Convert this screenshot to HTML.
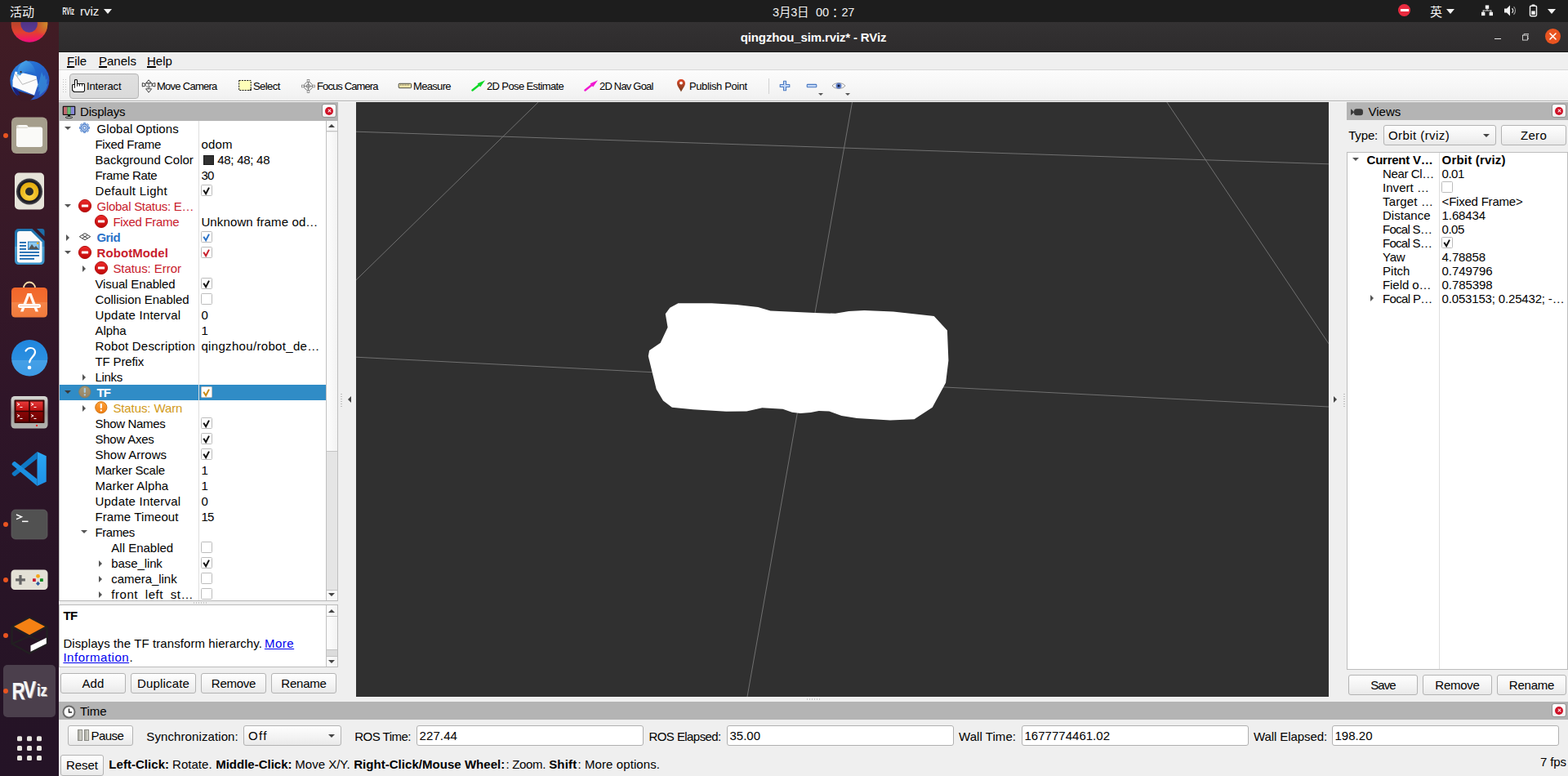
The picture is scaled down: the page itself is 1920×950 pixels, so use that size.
<!DOCTYPE html>
<html lang="zh-CN">
<head>
<meta charset="utf-8">
<title>qingzhou_sim.rviz* - RViz</title>
<style>
*{box-sizing:border-box;margin:0;padding:0}
html,body{width:1920px;height:950px;overflow:hidden;background:#efefef}
body{position:relative;font-family:"Liberation Sans","Noto Sans CJK SC",sans-serif;font-size:15px;color:#000;line-height:19px}
.abs{position:absolute}
.t{position:absolute;white-space:nowrap}
b,.b{font-weight:bold}
#topbar{position:absolute;left:0;top:0;width:1920px;height:27px;background:#1d1d1d;color:#f2f2f2}
#dock{position:absolute;left:0;top:27px;width:72px;height:923px;background:linear-gradient(180deg,#411c24 0%,#3a1a27 20%,#2f1528 50%,#281426 75%,#241326 100%);overflow:hidden}
#titlebar{position:absolute;left:72px;top:27px;width:1848px;height:37px;background:linear-gradient(180deg,#343233 0%,#312f30 40%,#2e2c2d 100%);border-bottom:1px solid #161616;color:#fff}
#menubar{position:absolute;left:72px;top:64px;width:1848px;height:22px;background:#efefef;border-bottom:1px solid #d8d8d8}
#toolbar{position:absolute;left:72px;top:86px;width:1848px;height:38px;background:linear-gradient(180deg,#fcfcfc 0%,#f7f7f7 50%,#f0f0f0 100%);border-bottom:1px solid #b4b4b4}
#viewport{position:absolute;left:436px;top:125px;width:1191px;height:728px;background:#303030;overflow:hidden}
.phead{position:absolute;height:22px;background:#b4b4b4}
.pclose{position:absolute;width:18px;height:17px;border:1px solid #939393;border-radius:3px;background:linear-gradient(180deg,#fff,#f0f0f0)}
.pclose i{position:absolute;left:3px;top:2.5px;width:10px;height:10px;border-radius:50%;background:#cf1126}
.pclose i:before,.pclose i:after{content:"";position:absolute;left:2.5px;top:4.4px;width:5px;height:1.2px;background:#fff;transform:rotate(45deg)}
.pclose i:after{transform:rotate(-45deg)}
.btn{position:absolute;height:26px;border:1px solid #b3b3b3;border-radius:3px;background:linear-gradient(180deg,#fefefe 0%,#f3f3f3 60%,#e9e9e9 100%);text-align:center;line-height:24px;font-size:15px}
.field{position:absolute;height:25px;border:1px solid #b0b0b0;border-radius:3px;background:#fff;line-height:23px;padding-left:2.5px;font-size:15px}
.combo{position:absolute;height:25px;border:1px solid #b3b3b3;border-radius:3px;background:linear-gradient(180deg,#fefefe 0%,#f3f3f3 60%,#e9e9e9 100%);line-height:23px;padding-left:5px;font-size:15px}
.combo:after{content:"";position:absolute;right:7px;top:10px;border:4px solid transparent;border-top:4px solid #444;border-bottom:0}
.tree{position:absolute;background:#fff;overflow:hidden}
.row{position:absolute;left:0;height:19px;line-height:19px;white-space:nowrap}
.row .t{top:0}
.cb{position:absolute;width:14px;height:14px;border:1px solid #bcbcbc;background:#fff;border-radius:1.5px}
.cb svg{position:absolute;left:0;top:0}
.ar{position:absolute;width:0;height:0}
.ar.d{border:4px solid transparent;border-top:5px solid #555;border-bottom:0}
.ar.r{border:4px solid transparent;border-left:5px solid #555;border-right:0}
.err{color:#c8202c}
.warn{color:#d29a20}
.ok{color:#2a72c8}
.tb{font-size:13px;line-height:19px}
.selt{color:#fff}
.lnk{color:#0000ee;text-decoration:underline}
.tree .t, .tree{font-size:15px}
#menubar u{text-decoration-thickness:1.6px;text-underline-offset:1.2px}

</style>
</head>
<body>
<div id="topbar">
  <div class="t" style="left:12px;top:5px;font-size:15px;line-height:20px">活动</div>
  <svg class="abs" style="left:76px;top:7px" width="16" height="12" viewBox="0 0 16 12"><text x="0.500" y="10.500" font-family="Liberation Sans,sans-serif" font-weight="bold" font-size="12" fill="#f4f4f4" textLength="14.500" lengthAdjust="spacingAndGlyphs">RViz</text></svg>
  <div class="t" style="left:98px;top:4px;font-size:15px;line-height:20px">rviz</div>
  <div class="abs" style="left:127px;top:11px;border:5px solid transparent;border-top:6px solid #f2f2f2;border-bottom:0"></div>
  <div class="t" id="clock" style="left:946px;top:5px;font-size:14.5px;line-height:20px"><span class="t" style="letter-spacing:-0.18px;left:0;top:0">3月3日</span><span class="t" style="letter-spacing:-0.09px;left:53px;top:0">00</span><span class="t" style="left:69px;top:-0.5px;width:15px;text-align:center;font-family:'Noto Sans CJK JP','Noto Sans CJK SC',sans-serif">：</span><span class="t" style="letter-spacing:-0.43px;left:84.500px;top:0">27</span></div>
  <div class="abs" style="left:1712px;top:5px;width:15px;height:15px;border-radius:50%;background:#ea2b3f"><div class="abs" style="left:2.500px;top:6.200px;width:10px;height:2.800px;background:#fff"></div></div>
  <div class="t" style="left:1751px;top:5px;font-size:15px;line-height:20px">英</div>
  <div class="abs" style="left:1771px;top:11px;border:5px solid transparent;border-top:6px solid #f2f2f2;border-bottom:0"></div>
  <svg class="abs" style="left:1812.500px;top:5.500px" width="16" height="14" viewBox="0 0 17 16"><g fill="#f2f2f2"><rect x="6" y="0.5" width="5" height="5"/><rect x="0.5" y="10" width="5" height="5"/><rect x="11.5" y="10" width="5" height="5"/><rect x="8" y="5" width="1" height="3"/><rect x="2.5" y="7.5" width="12" height="1"/><rect x="2.5" y="7.5" width="1" height="3"/><rect x="13.5" y="7.5" width="1" height="3"/></g></svg>
  <svg class="abs" style="left:1841px;top:5px" width="17" height="16" viewBox="0 0 17 16"><path d="M1 5.5h3l4-4v13l-4-4H1z" fill="#f2f2f2"/><path d="M10.5 5.2a4 4 0 0 1 0 5.6" stroke="#f2f2f2" stroke-width="1.3" fill="none"/><path d="M12.5 3.2a6.8 6.8 0 0 1 0 9.6" stroke="#9a9a9a" stroke-width="1.2" fill="none"/></svg>
  <svg class="abs" style="left:1871.500px;top:5px" width="11" height="16" viewBox="0 0 12 18"><rect x="4" y="0.5" width="4" height="2" fill="#f2f2f2"/><rect x="1.5" y="2.5" width="9" height="14" rx="1.5" fill="none" stroke="#f2f2f2" stroke-width="1.6"/><rect x="3.5" y="9.5" width="5" height="5" fill="#f2f2f2"/></svg>
  <div class="abs" style="left:1895px;top:11px;border:5px solid transparent;border-top:6px solid #f2f2f2;border-bottom:0"></div>
</div>
<div id="dock">
<svg width="72" height="923" viewBox="0 27 72 923" style="position:absolute;left:0;top:0">
<defs>
<linearGradient id="ffx" gradientUnits="userSpaceOnUse" x1="0" y1="27" x2="0" y2="52"><stop offset="0" stop-color="#b4452b"/><stop offset="0.5" stop-color="#e2402f"/><stop offset="0.800" stop-color="#f01e5c"/><stop offset="1" stop-color="#ee0a86"/></linearGradient><radialGradient id="ffy" gradientUnits="userSpaceOnUse" cx="57" cy="30" r="15"><stop offset="0" stop-color="#d0902a" stop-opacity="0.900"/><stop offset="1" stop-color="#d0902a" stop-opacity="0"/></radialGradient><linearGradient id="ffi" x1="0" y1="0" x2="0" y2="1"><stop offset="0" stop-color="#4a2f7a"/><stop offset="1" stop-color="#5b3a96"/></linearGradient><linearGradient id="tbh" x1="0" y1="0" x2="1" y2="1"><stop offset="0" stop-color="#4fb0ee"/><stop offset="1" stop-color="#2266cc"/></linearGradient>
<linearGradient id="tbd" x1="0" y1="0" x2="1" y2="1"><stop offset="0" stop-color="#2f86e0"/><stop offset="0.500" stop-color="#2366cc"/><stop offset="1" stop-color="#3248b4"/></linearGradient>
<radialGradient id="spk" cx="0.5" cy="0.7" r="0.6"><stop offset="0" stop-color="#ffd84a"/><stop offset="1" stop-color="#e6ae10"/></radialGradient>
<linearGradient id="lo" x1="0" y1="0" x2="0" y2="1"><stop offset="0" stop-color="#1c6ea8"/><stop offset="0.5" stop-color="#2c86c0"/><stop offset="0.5" stop-color="#4aa0d0"/><stop offset="1" stop-color="#3a92c8"/></linearGradient>
<linearGradient id="sw" x1="0" y1="0" x2="0" y2="1"><stop offset="0" stop-color="#f2662a"/><stop offset="0.5" stop-color="#f27032"/><stop offset="0.5" stop-color="#f58448"/><stop offset="1" stop-color="#f07a3c"/></linearGradient>
<linearGradient id="hp" x1="0" y1="0" x2="0" y2="1"><stop offset="0" stop-color="#1f86de"/><stop offset="0.55" stop-color="#2b8fe0"/><stop offset="0.55" stop-color="#46a0e6"/><stop offset="1" stop-color="#3b9ae6"/></linearGradient>
<linearGradient id="tmf" x1="0" y1="0" x2="0" y2="1"><stop offset="0" stop-color="#d8d8d4"/><stop offset="0.5" stop-color="#9c9c98"/><stop offset="1" stop-color="#b4b4b0"/></linearGradient>
<linearGradient id="tms" x1="0" y1="0" x2="0" y2="1"><stop offset="0" stop-color="#e83a3a"/><stop offset="0.48" stop-color="#b80e0e"/><stop offset="0.52" stop-color="#8a0606"/><stop offset="1" stop-color="#6a0202"/></linearGradient>
<linearGradient id="vs1" x1="0" y1="0" x2="0" y2="1"><stop offset="0" stop-color="#2aa8f4"/><stop offset="1" stop-color="#1e90e6"/></linearGradient>
</defs>
<!-- firefox (clipped) -->
<circle cx="36" cy="29.500" r="22.300" fill="url(#ffx)"/>
<circle cx="36" cy="29.500" r="22.300" fill="url(#ffy)"/>
<circle cx="35.600" cy="29.500" r="10.300" fill="url(#ffi)"/>
<!-- thunderbird -->
<circle cx="36.400" cy="98.500" r="24" fill="url(#tbd)"/>
<path d="M51 88l2.500 6 1.500-3 1 7 2-2.500-1 8 2-1.500-3 8-8 7 1-6-2.500 2 1.500-7-3 1.500 3-8z" fill="#3a9fe0" opacity="0.550"/>
<path d="M20 110.500L42.500 117.500 36.500 123.500 27 123.500 21.500 118.500z" fill="#3c1a26"/>
<path d="M15.500 106l6.500 4.500 2.500 6.500-3.500-1.500 1 2.500C18.500 115 16.500 111 15.500 106z" fill="#1b1f78"/>
<path d="M18.600 87.600L30 89.800 44.500 93.300 46.400 103.400 42 116.600 15.500 105.900 15.500 98.300z" fill="#fbfbfb"/>
<path d="M18.600 90.400L27.500 103.400 44.800 97" fill="none" stroke="#9a9a9a" stroke-width="0.700"/>
<path d="M32 74C26 76 21.500 82 21 90.500L24.500 92.500C29 86.500 37 86 43.800 91 43 82 38.500 76 32 74z" fill="url(#tbh)"/>
<path d="M20.500 91.400L24.200 90.600 21.600 94.600z" fill="#a8d8e8"/>
<circle cx="25.600" cy="88.100" r="1.100" fill="#3a2418"/>
<!-- files -->
<rect x="14" y="143.500" width="44" height="44.500" rx="6" fill="#a59e8c"/>
<path d="M20 155.500c0-1.500 1-2.500 2.500-2.500h9.500c1.200 0 2 0.800 2.600 2.600h15c1.500 0 2.500 1 2.500 2.500v19.500c0 1.500-1 2.500-2.500 2.500h-27c-1.500 0-2.600-1-2.600-2.500z" fill="#fafaf8"/>
<path d="M20 158.500c0-1 0.600-1.600 1.600-1.600h11.500l2-1.300H22.500V153.100c-1.500 0-2.500 1-2.500 2.400z" fill="#dedbd2"/>
<!-- rhythmbox -->
<rect x="18" y="211.500" width="36" height="45" rx="5" fill="#e6e3d9"/>
<circle cx="36" cy="234.500" r="16" fill="#3a3a40"/>
<circle cx="36" cy="234.500" r="14" fill="#1c1c24"/>
<circle cx="36" cy="234.500" r="11.300" fill="url(#spk)"/>
<circle cx="36" cy="234.500" r="5" fill="#2c2c2c"/>
<!-- libreoffice writer -->
<path d="M18 285c0-3 2-5 5-5h16.500L54.500 295v24c0 3-2 5-5 5H23c-3 0-5-2-5-5z" fill="url(#lo)"/>
<path d="M45 280h6.500c1.800 0 3 1.200 3 3v6.500z" fill="#1c6ea8"/>
<path d="M21 286c0-1.800 1.200-3 3-3h14L51.500 296.500v22c0 1.800-1.200 3-3 3H24c-1.800 0-3-1.200-3-3z" fill="#fbfbfb"/>
<g fill="#1766ae"><rect x="24" y="296" width="8" height="1.800"/><rect x="24" y="300" width="8" height="1.800"/><rect x="24" y="304" width="8" height="1.800"/><rect x="24" y="308" width="24" height="1.800"/><rect x="24" y="312" width="24" height="1.800"/><rect x="24" y="316" width="18" height="1.800"/></g>
<rect x="34.500" y="296" width="13.500" height="9.500" fill="#8ac8f0" stroke="#1766ae" stroke-width="0.800"/>
<path d="M35 305l4-6 3 4 2-2 3.500 4z" fill="#555"/>
<rect x="45" y="296.500" width="2.500" height="2.500" fill="#f0b020"/>
<!-- software -->
<path d="M29 355v-2.500a7 7 0 0 1 14 0V355" fill="none" stroke="#f8dca8" stroke-width="1.800"/>
<rect x="14" y="352" width="44" height="36.500" rx="4.500" fill="url(#sw)"/>
<path d="M25 381.500L33.500 359h5L47 381.500h-3.600L36 362l-7.400 19.500z" fill="#fff6f0"/>
<rect x="22" y="372" width="28" height="5" rx="2.500" fill="#fff"/>
<rect x="24" y="374" width="24" height="1" fill="#f8c8b0"/>
<!-- help -->
<circle cx="36.200" cy="438.300" r="22.200" fill="url(#hp)"/>
<path d="M31.500 429.500c1.500-2.500 3.500-3.500 6-3.500 3.500 0 5.500 2.200 5.500 5 0 5-6.500 7-6.800 12.500" fill="none" stroke="#fff" stroke-width="2.200" stroke-linecap="round"/>
<circle cx="36" cy="450" r="2.300" fill="#fff"/>
<!-- terminator -->
<rect x="13.500" y="485" width="45" height="39.500" rx="4.500" fill="url(#tmf)"/>
<rect x="17.500" y="489.500" width="37" height="28.500" rx="1" fill="#3a0606"/>
<rect x="19.500" y="491.500" width="33" height="24.500" fill="url(#tms)"/>
<path d="M36 491v26M19 503.500h34" stroke="#300404" stroke-width="1.600"/>
<g stroke="#fff" stroke-width="1" fill="none"><path d="M21 493.500l3 1.500-3 1.500M24.500 498.500h3"/><path d="M38 493.500l3 1.500-3 1.500M41.500 498.500h3"/><path d="M21 507.500l3 1.500-3 1.500M24.500 512.500h3"/><path d="M38 507.500l3 1.500-3 1.500M41.500 512.500h3"/></g>
<rect x="44" y="520" width="2" height="2" fill="#f01818"/>
<!-- vscode -->
<path d="M45.500 553l11.200 5.200v31.500L45.500 595z" fill="url(#vs1)"/>
<path d="M45.500 553v8.500L19 582.500c-1 0.800-2 0.600-2.800-0.200l-1.200-1.300c-0.700-0.900-0.500-1.800 0.300-2.500z" fill="#0f78c4"/>
<path d="M45.500 595v-8.500L19 565.500c-1-0.800-2-0.600-2.800 0.200l-1.200 1.300c-0.700 0.900-0.500 1.800 0.300 2.500z" fill="#1b8fe0"/>
<!-- terminal -->
<rect x="14" y="624" width="44" height="36" rx="5" fill="#515151"/>
<rect x="14" y="624" width="44" height="36" rx="5" fill="none" stroke="#6a6a6a" stroke-width="0.600"/>
<path d="M20 630l6.500 2.800-6.500 2.800" fill="none" stroke="#fff" stroke-width="1.400"/>
<rect x="27" y="637.600" width="7.500" height="1.500" fill="#fff"/>
<!-- game -->
<rect x="13.500" y="697.500" width="45" height="24.500" rx="4.500" fill="#e4e1d6"/>
<path d="M23.400 704h3.200v4.300h4.300v3.200h-4.300v4.300h-3.200v-4.300h-4.300v-3.200h4.300z" fill="#666"/>
<circle cx="46.500" cy="705.300" r="2.400" fill="#f5a518"/>
<rect x="40" y="708.200" width="3.800" height="3.800" rx="0.600" fill="#c8102e"/>
<rect x="49" y="708.200" width="3.800" height="3.800" rx="0.600" fill="#108a20"/>
<path d="M46.500 711.800l2.500 2.600-2.500 2.600-2.500-2.600z" fill="#2c5aa0"/>
<!-- gazebo -->
<g fill="none" stroke="#222021" stroke-width="2.200" stroke-linejoin="round"><path d="M36 756L57.500 767.500V788L36 800 14.500 788V767.500z"/><path d="M14.500 767.500L36 779l21.500-11.500M36 779L57 788M36 779L15 788"/></g>
<path d="M36.100 757L55.100 767 36.100 777.300 17 767z" fill="#f58113"/>
<path d="M37.500 790.300L56.800 780.700V788L37.500 797.700z" fill="#fff"/>
<!-- rviz -->
<rect x="4" y="814" width="64" height="64" rx="5" fill="#4b3f4c"/>
<g font-family="Liberation Sans,sans-serif" font-weight="bold"><g fill="#a9a5aa"><text transform="translate(15.5 856.6) scale(0.74 1)" font-size="30">R</text><text transform="translate(29.6 855.0) scale(0.8 1)" font-size="29">V</text><text transform="translate(46.0 852.6) scale(0.78 1)" font-size="21">iz</text></g><g fill="#f6f6f6"><text transform="translate(14.5 855.8) scale(0.74 1)" font-size="30">R</text><text transform="translate(28.6 854.2) scale(0.8 1)" font-size="29">V</text><text transform="translate(45.0 851.8) scale(0.78 1)" font-size="21">iz</text></g></g>
<!-- apps grid -->
<g fill="#e9e7e1"><rect x="21" y="901.300" width="6" height="6" rx="1.500"/><rect x="33" y="901.300" width="6" height="6" rx="1.500"/><rect x="45" y="901.300" width="6" height="6" rx="1.500"/><rect x="21" y="913.100" width="6" height="6" rx="1.500"/><rect x="33" y="913.100" width="6" height="6" rx="1.500"/><rect x="45" y="913.100" width="6" height="6" rx="1.500"/><rect x="21" y="925" width="6" height="6" rx="1.500"/><rect x="33" y="925" width="6" height="6" rx="1.500"/><rect x="45" y="925" width="6" height="6" rx="1.500"/></g>
<!-- running dots -->
<g fill="#e95420"><circle cx="7" cy="166" r="3"/><circle cx="7" cy="642" r="3"/><circle cx="7" cy="710" r="3"/><circle cx="7" cy="778" r="3"/><circle cx="7" cy="846" r="3"/></g>
</svg>
</div>
<div id="titlebar">
  <div class="t b" style="letter-spacing:-0.14px;left:834.800px;top:9px;font-size:15px;line-height:19px">qingzhou_sim.rviz* - RViz</div>
  <div class="abs" style="left:1758px;top:19.500px;width:8px;height:1.200px;background:#e6e6e6"></div>
  <svg class="abs" style="left:1791.500px;top:14px" width="8.500" height="8.500" viewBox="0 0 10 10"><path d="M2.5 2.5V0.5h7v7h-2" fill="none" stroke="#d8d8d8" stroke-width="1"/><rect x="0.5" y="2.5" width="7" height="7" fill="none" stroke="#e6e6e6" stroke-width="1"/></svg>
  <div class="abs" style="left:1820px;top:8px;width:19px;height:19px;border-radius:50%;background:#e95420"><svg class="abs" style="left:0;top:0" width="19" height="19" viewBox="0 0 19 19"><path d="M6 6l7 7M13 6l-7 7" stroke="#fff" stroke-width="1.6" stroke-linecap="round"/></svg></div>
</div>
<div id="menubar">
  <div class="t" style="left:10px;top:1px;font-size:15px;line-height:19px"><u>F</u>ile</div>
  <div class="t" style="left:49px;top:1px;font-size:15px;line-height:19px"><u>P</u>anels</div>
  <div class="t" style="left:108px;top:1px;font-size:15px;line-height:19px"><u>H</u>elp</div>
</div>
<div id="toolbar">
  <div class="abs" style="left:4px;top:10px;width:5px;height:18px;background-image:radial-gradient(circle,#c4c4c4 0.6px,transparent 0.9px);background-size:3px 3px"></div>
  <div class="abs" style="left:13px;top:4px;width:85px;height:31px;border:1px solid #b5b5b5;border-radius:4px;background:linear-gradient(180deg,#e0e0e0,#dadada)"></div>
  <svg class="abs" style="left:16px;top:11px" width="16" height="16" viewBox="0 0 16 16"><path d="M3.5 6.5V1.700Q3.500 0.500 5 0.500Q6.500 0.500 6.500 1.700V5.500H14.300Q15.500 5.500 15.500 6.800V14.200L14.300 15.500H2.700L0.500 13.400V7.600Q0.500 6.500 1.700 6.500Z" fill="#fff" stroke="#0a0a0a" stroke-width="1.100" stroke-linejoin="round"/><path d="M3.500 6.500V10.800M6.500 5.500V8.800M9.500 5.800V8.500M12.500 5.800V8.500" fill="none" stroke="#222" stroke-width="1"/></svg>
  <div class="t tb" style="letter-spacing:-0.11px;left:34px;top:10px">Interact</div>
  <svg class="abs" style="left:101px;top:11px" width="18" height="17" viewBox="0 0 18 17"><rect x="8" y="4.500" width="2.200" height="8" fill="#a8a8a8"/><g fill="#fff" stroke="#3c3c3c" stroke-width="1" stroke-linejoin="round"><path d="M9.100 0.800L12.600 4.900H5.600z"/><path d="M9.100 16.200L5.600 11.800H12.600z"/><path d="M1.300 4.600L5 5.600V8L1.300 9z"/><path d="M16.900 4.600L13.200 5.600V8L16.900 9z"/></g><ellipse cx="9.100" cy="6.800" rx="4.600" ry="2.600" fill="none" stroke="#3c3c3c" stroke-width="0.900" stroke-dasharray="2.200 1.200"/></svg>
  <div class="t tb" style="letter-spacing:-0.73px;left:120px;top:10px">Move Camera</div>
  <svg class="abs" style="left:219px;top:11px" width="18" height="16" viewBox="0 0 18 16"><rect x="1.700" y="1.500" width="14.500" height="12" fill="#ffffb8" stroke="#111" stroke-width="1" stroke-dasharray="2 1.2"/><path d="M16.8 11v2.800h-2.800z" fill="#111"/></svg>
  <div class="t tb" style="letter-spacing:-0.57px;left:238px;top:10px">Select</div>
  <svg class="abs" style="left:297px;top:11px" width="17" height="17" viewBox="0 0 19 19"><g fill="none" stroke="#777" stroke-width="1"><circle cx="9.500" cy="9.500" r="5.600"/><circle cx="9.500" cy="9.500" r="2.600"/><path d="M9.500 0.500v18M0.500 9.500h18"/></g><g fill="#fff" stroke="#777" stroke-width="0.8"><rect x="8" y="0.500" width="3" height="3"/><rect x="8" y="15.500" width="3" height="3"/><rect x="0.500" y="8" width="3" height="3"/><rect x="15.500" y="8" width="3" height="3"/></g></svg>
  <div class="t tb" style="letter-spacing:-0.89px;left:316px;top:10px">Focus Camera</div>
  <svg class="abs" style="left:415px;top:15px" width="18" height="9" viewBox="0 0 18 9"><rect x="1.200" y="1.300" width="15.300" height="5.400" rx="0.800" fill="#efe4a8" stroke="#4a4a40" stroke-width="1"/><path d="M3.500 1.500v2.500M5.500 1.500v2.500M7.500 1.500v2.500M9.500 1.500v2.500M11.500 1.500v2.500M13.500 1.500v2.500" stroke="#7a7460" stroke-width="0.7"/></svg>
  <div class="t tb" style="letter-spacing:-0.67px;left:434px;top:10px">Measure</div>
  <svg class="abs" style="left:505px;top:11px" width="18" height="15" viewBox="0 0 18 15"><path d="M1.500 13.500L10 6.800" stroke="#10d828" stroke-width="2.400" stroke-linecap="round"/><path d="M17 1.200L7.600 5.200l3.600 4.400z" fill="#10d828"/></svg>
  <div class="t tb" style="letter-spacing:-0.62px;left:524px;top:10px">2D Pose Estimate</div>
  <svg class="abs" style="left:643px;top:11px" width="18" height="15" viewBox="0 0 18 15"><path d="M1.500 13.500L10 6.800" stroke="#f018d0" stroke-width="2.400" stroke-linecap="round"/><path d="M17 1.200L7.600 5.200l3.600 4.400z" fill="#f018d0"/></svg>
  <div class="t tb" style="letter-spacing:-0.8px;left:662px;top:10px">2D Nav Goal</div>
  <svg class="abs" style="left:756px;top:10px" width="12" height="18" viewBox="0 0 12 18"><defs><linearGradient id="pin" x1="0" y1="0" x2="0" y2="1"><stop offset="0" stop-color="#e0492a"/><stop offset="1" stop-color="#6e3a1c"/></linearGradient></defs><path d="M6 1C3.200 1 1 3.100 1 5.900c0 3.300 3.200 6.500 5 10.600 1.800-4.100 5-7.300 5-10.600C11 3.100 8.800 1 6 1z" fill="url(#pin)"/><circle cx="6" cy="5.600" r="1.900" fill="#fff"/></svg>
  <div class="t tb" style="letter-spacing:-0.39px;left:772px;top:10px">Publish Point</div>
  <div class="abs" style="left:869px;top:10px;width:1px;height:19px;background:#d2d2d2"></div>
  <svg class="abs" style="left:882px;top:12px" width="14" height="14" viewBox="0 0 14 14"><path d="M5.500 1.200h3v4.300h4.300v3H8.500v4.300h-3V8.500H1.200v-3h4.300z" fill="#c4d8f6" stroke="#4a79c2" stroke-width="1.100" stroke-linejoin="round"/></svg>
  <svg class="abs" style="left:915px;top:16px" width="14" height="7" viewBox="0 0 14 7"><rect x="1.200" y="1.400" width="11.600" height="3.400" rx="0.800" fill="#c4d8f6" stroke="#4a79c2" stroke-width="1.100"/></svg>
  <div class="abs" style="left:930px;top:28px;border:3px solid transparent;border-top:3px solid #555;border-bottom:0"></div>
  <svg class="abs" style="left:946px;top:13px" width="18" height="12" viewBox="0 0 18 12"><path d="M1 6C4 1.500 14 1.500 17 6 14 10.500 4 10.500 1 6z" fill="#f4f4f4" stroke="#9a9a9a" stroke-width="1"/><circle cx="9" cy="6" r="3.500" fill="#5f7fc8"/><circle cx="9" cy="6" r="1.500" fill="#101838"/></svg>
  <div class="abs" style="left:963px;top:28px;border:3px solid transparent;border-top:3px solid #555;border-bottom:0"></div>
</div>
<svg width="0" height="0" style="position:absolute"><defs><linearGradient id="gerr" x1="0" y1="0" x2="0" y2="1"><stop offset="0" stop-color="#ec2a2a"/><stop offset="1" stop-color="#bf0808"/></linearGradient><linearGradient id="gwarn" x1="0" y1="0" x2="0" y2="1"><stop offset="0" stop-color="#ffa23a"/><stop offset="1" stop-color="#ef7d12"/></linearGradient></defs></svg>
<div class="phead" style="left:72px;top:125px;width:342px;height:23px"></div>
<div class="abs" style="left:72px;top:148px;width:1px;height:588px;background:#bcbcbc"></div>
<div class="abs" style="left:72px;top:124px;width:1848px;height:1px;background:#f8f8f8"></div>
<svg class="abs" style="left:75.500px;top:128.500px" width="17" height="17" viewBox="0 0 18 18"><rect x="0.750" y="0.750" width="16.500" height="12" rx="1.200" fill="#0c0c0c" /><rect x="2" y="2" width="4.700" height="9.500" fill="#c06870"/><rect x="6.700" y="2" width="4.700" height="9.500" fill="#68b870"/><rect x="11.400" y="2" width="4.600" height="9.500" fill="#8888d8"/><rect x="7.500" y="12.500" width="3" height="2.500" fill="#111"/><ellipse cx="9" cy="15.600" rx="4.600" ry="1.100" fill="#e8e8e8" stroke="#111" stroke-width="0.900"/></svg>
<div class="t" style="letter-spacing:-0.16px;left:98px;top:127px;font-size:15px;line-height:19px">Displays</div>
<div class="pclose" style="left:394px;top:127px"><i></i></div>
<div class="tree" style="left:73px;top:148px;width:326px;height:587px">
<div class="ar" style="left:6px;top:7px;border:4px solid transparent;border-top:4px solid #555;border-bottom:0"></div>
<svg class="abs" style="left:24px;top:2px" width="13" height="13" viewBox="0 0 14 14"><g transform="translate(7 7)"><g fill="#b9cdee" stroke="#3a72c4" stroke-width="0.900"><rect x="-1.300" y="-6.500" width="2.600" height="13" rx="0.400"/><rect x="-1.300" y="-6.500" width="2.600" height="13" rx="0.400" transform="rotate(45)"/><rect x="-1.300" y="-6.500" width="2.600" height="13" rx="0.400" transform="rotate(90)"/><rect x="-1.300" y="-6.500" width="2.600" height="13" rx="0.400" transform="rotate(135)"/><circle r="4.500"/></g><circle r="2.900" fill="#b9cdee" stroke="none"/><circle r="2" fill="#fff" stroke="#3a72c4" stroke-width="1.100"/></g></svg>
<div class="t " style="letter-spacing:0.07px;left:45.5px;top:0px;line-height:19px">Global Options</div>
<div class="t " style="letter-spacing:-0.34px;left:43.5px;top:19px;line-height:19px">Fixed Frame</div>
<div class="t" style="letter-spacing:0.22px;left:173.4px;top:19px;line-height:19px">odom</div>
<div class="t " style="letter-spacing:0.02px;left:43.5px;top:38px;line-height:19px">Background Color</div>
<div class="abs" style="left:176px;top:42px;width:13px;height:12px;background:#303030;border:1px solid #1c1c1c"></div>
<div class="t" style="letter-spacing:-0.27px;left:193.2px;top:38px;line-height:19px">48; 48; 48</div>
<div class="t " style="letter-spacing:-0.34px;left:43.5px;top:57px;line-height:19px">Frame Rate</div>
<div class="t" style="letter-spacing:-0.73px;left:173.4px;top:57px;line-height:19px">30</div>
<div class="t " style="letter-spacing:0.33px;left:43.5px;top:76px;line-height:19px">Default Light</div>
<div class="cb" style="left:173px;top:78px"><svg width="12" height="12" viewBox="0 0 12 12"><path d="M2.300 5.800L5.100 10.200 9 2.600" fill="none" stroke="#111" stroke-width="2" stroke-linecap="butt" stroke-linejoin="miter"/></svg></div>
<div class="ar" style="left:6px;top:102px;border:4px solid transparent;border-top:4px solid #555;border-bottom:0"></div>
<svg class="abs" style="left:22px;top:95px" width="18" height="18" viewBox="0 0 18 18"><circle cx="9" cy="9" r="7.600" fill="url(#gerr)" stroke="#b10d0d" stroke-width="1"/><rect x="4.900" y="7.400" width="8.200" height="3.200" rx="0.600" fill="#fff"/></svg>
<div class="t err" style="letter-spacing:-0.27px;left:45.5px;top:95px;line-height:19px">Global Status: E…</div>
<svg class="abs" style="left:42px;top:114px" width="18" height="18" viewBox="0 0 18 18"><circle cx="9" cy="9" r="7.600" fill="url(#gerr)" stroke="#b10d0d" stroke-width="1"/><rect x="4.900" y="7.400" width="8.200" height="3.200" rx="0.600" fill="#fff"/></svg>
<div class="t err" style="letter-spacing:-0.3px;left:65.4px;top:114px;line-height:19px">Fixed Frame</div>
<div class="t" style="letter-spacing:0.13px;left:173.4px;top:114px;line-height:19px">Unknown frame od…</div>
<div class="ar" style="left:8px;top:139px;border:4px solid transparent;border-left:4px solid #555;border-right:0"></div>
<svg class="abs" style="left:24px;top:137px" width="15" height="10" viewBox="0 0 15 10"><g fill="none" stroke="#3c3c3c" stroke-width="1"><path d="M7 0.600L13.700 4.700 7 8.800 0.300 4.700z"/><path d="M3.650 2.650L10.350 6.750M10.350 2.650L3.650 6.750"/></g></svg>
<div class="t ok b" style="letter-spacing:-0.58px;left:45.5px;top:133px;line-height:19px">Grid</div>
<div class="cb" style="left:173px;top:135px"><svg width="12" height="12" viewBox="0 0 12 12"><path d="M2.300 5.800L5.100 10.200 9 2.600" fill="none" stroke="#2a72c8" stroke-width="2" stroke-linecap="butt" stroke-linejoin="miter"/></svg></div>
<div class="ar" style="left:6px;top:159px;border:4px solid transparent;border-top:4px solid #555;border-bottom:0"></div>
<svg class="abs" style="left:22px;top:152px" width="18" height="18" viewBox="0 0 18 18"><circle cx="9" cy="9" r="7.600" fill="url(#gerr)" stroke="#b10d0d" stroke-width="1"/><rect x="4.900" y="7.400" width="8.200" height="3.200" rx="0.600" fill="#fff"/></svg>
<div class="t err b" style="letter-spacing:0.08px;left:45.5px;top:152px;line-height:19px">RobotModel</div>
<div class="cb" style="left:173px;top:154px"><svg width="12" height="12" viewBox="0 0 12 12"><path d="M2.300 5.800L5.100 10.200 9 2.600" fill="none" stroke="#c8202c" stroke-width="2" stroke-linecap="butt" stroke-linejoin="miter"/></svg></div>
<div class="ar" style="left:28px;top:177px;border:4px solid transparent;border-left:4px solid #555;border-right:0"></div>
<svg class="abs" style="left:42px;top:171px" width="18" height="18" viewBox="0 0 18 18"><circle cx="9" cy="9" r="7.600" fill="url(#gerr)" stroke="#b10d0d" stroke-width="1"/><rect x="4.900" y="7.400" width="8.200" height="3.200" rx="0.600" fill="#fff"/></svg>
<div class="t err" style="letter-spacing:-0.05px;left:65.4px;top:171px;line-height:19px">Status: Error</div>
<div class="t " style="letter-spacing:-0.13px;left:43.5px;top:190px;line-height:19px">Visual Enabled</div>
<div class="cb" style="left:173px;top:192px"><svg width="12" height="12" viewBox="0 0 12 12"><path d="M2.300 5.800L5.100 10.200 9 2.600" fill="none" stroke="#111" stroke-width="2" stroke-linecap="butt" stroke-linejoin="miter"/></svg></div>
<div class="t " style="letter-spacing:-0.05px;left:43.5px;top:209px;line-height:19px">Collision Enabled</div>
<div class="cb" style="left:173px;top:211px"></div>
<div class="t " style="letter-spacing:0.21px;left:43.5px;top:228px;line-height:19px">Update Interval</div>
<div class="t" style="letter-spacing:-0.34px;left:173.4px;top:228px;line-height:19px">0</div>
<div class="t " style="letter-spacing:-0.08px;left:43.5px;top:247px;line-height:19px">Alpha</div>
<div class="t" style="letter-spacing:-2.34px;left:173.4px;top:247px;line-height:19px">1</div>
<div class="t " style="letter-spacing:0.19px;left:43.5px;top:266px;line-height:19px">Robot Description</div>
<div class="t" style="letter-spacing:0.33px;left:173.4px;top:266px;line-height:19px">qingzhou/robot_de…</div>
<div class="t " style="letter-spacing:-0.15px;left:43.5px;top:285px;line-height:19px">TF Prefix</div>
<div class="ar" style="left:28px;top:310px;border:4px solid transparent;border-left:4px solid #555;border-right:0"></div>
<div class="t " style="letter-spacing:-0.3px;left:43.5px;top:304px;line-height:19px">Links</div>
<div class="abs" style="left:0;top:323px;width:326px;height:19px;background:#308cc6"></div>
<div class="ar" style="left:6px;top:330px;border:4px solid transparent;border-top:4px solid #3a3a3a;border-bottom:0"></div>
<svg class="abs" style="left:22px;top:323px;opacity:0.55" width="18" height="18" viewBox="0 0 18 18"><circle cx="8.800" cy="8.800" r="7.100" fill="url(#gwarn)" stroke="#d27510" stroke-width="1"/><rect x="7.700" y="3.900" width="2.200" height="6" rx="0.800" fill="#fff"/><rect x="7.700" y="11.200" width="2.200" height="2.300" rx="0.800" fill="#fff"/></svg>
<div class="t selt b" style="letter-spacing:-0.95px;left:45.5px;top:323px;line-height:19px">TF</div>
<div class="cb" style="left:173px;top:325px"><svg width="12" height="12" viewBox="0 0 12 12"><path d="M2.300 5.800L5.100 10.200 9 2.600" fill="none" stroke="#c98a14" stroke-width="2" stroke-linecap="butt" stroke-linejoin="miter"/></svg></div>
<div class="ar" style="left:28px;top:348px;border:4px solid transparent;border-left:4px solid #555;border-right:0"></div>
<svg class="abs" style="left:42px;top:342px;opacity:1" width="18" height="18" viewBox="0 0 18 18"><circle cx="8.800" cy="8.800" r="7.100" fill="url(#gwarn)" stroke="#d27510" stroke-width="1"/><rect x="7.700" y="3.900" width="2.200" height="6" rx="0.800" fill="#fff"/><rect x="7.700" y="11.200" width="2.200" height="2.300" rx="0.800" fill="#fff"/></svg>
<div class="t warn" style="letter-spacing:-0.1px;left:65.4px;top:342px;line-height:19px">Status: Warn</div>
<div class="t " style="letter-spacing:-0.34px;left:43.5px;top:361px;line-height:19px">Show Names</div>
<div class="cb" style="left:173px;top:363px"><svg width="12" height="12" viewBox="0 0 12 12"><path d="M2.300 5.800L5.100 10.200 9 2.600" fill="none" stroke="#111" stroke-width="2" stroke-linecap="butt" stroke-linejoin="miter"/></svg></div>
<div class="t " style="letter-spacing:-0.24px;left:43.5px;top:380px;line-height:19px">Show Axes</div>
<div class="cb" style="left:173px;top:382px"><svg width="12" height="12" viewBox="0 0 12 12"><path d="M2.300 5.800L5.100 10.200 9 2.600" fill="none" stroke="#111" stroke-width="2" stroke-linecap="butt" stroke-linejoin="miter"/></svg></div>
<div class="t " style="left:43.5px;top:399px;line-height:19px">Show Arrows</div>
<div class="cb" style="left:173px;top:401px"><svg width="12" height="12" viewBox="0 0 12 12"><path d="M2.300 5.800L5.100 10.200 9 2.600" fill="none" stroke="#111" stroke-width="2" stroke-linecap="butt" stroke-linejoin="miter"/></svg></div>
<div class="t " style="letter-spacing:-0.25px;left:43.5px;top:418px;line-height:19px">Marker Scale</div>
<div class="t" style="letter-spacing:-2.34px;left:173.4px;top:418px;line-height:19px">1</div>
<div class="t " style="letter-spacing:0.12px;left:43.5px;top:437px;line-height:19px">Marker Alpha</div>
<div class="t" style="letter-spacing:-2.34px;left:173.4px;top:437px;line-height:19px">1</div>
<div class="t " style="letter-spacing:0.21px;left:43.5px;top:456px;line-height:19px">Update Interval</div>
<div class="t" style="letter-spacing:-0.34px;left:173.4px;top:456px;line-height:19px">0</div>
<div class="t " style="letter-spacing:0.09px;left:43.5px;top:475px;line-height:19px">Frame Timeout</div>
<div class="t" style="letter-spacing:-0.73px;left:173.4px;top:475px;line-height:19px">15</div>
<div class="ar" style="left:26px;top:501px;border:4px solid transparent;border-top:4px solid #555;border-bottom:0"></div>
<div class="t " style="letter-spacing:-0.44px;left:43.5px;top:494px;line-height:19px">Frames</div>
<div class="t " style="left:63.3px;top:513px;line-height:19px">All Enabled</div>
<div class="cb" style="left:173px;top:515px"></div>
<div class="ar" style="left:48px;top:538px;border:4px solid transparent;border-left:4px solid #555;border-right:0"></div>
<div class="t " style="letter-spacing:-0.1px;left:63.3px;top:532px;line-height:19px">base_link</div>
<div class="cb" style="left:173px;top:534px"><svg width="12" height="12" viewBox="0 0 12 12"><path d="M2.300 5.800L5.100 10.200 9 2.600" fill="none" stroke="#111" stroke-width="2" stroke-linecap="butt" stroke-linejoin="miter"/></svg></div>
<div class="ar" style="left:48px;top:557px;border:4px solid transparent;border-left:4px solid #555;border-right:0"></div>
<div class="t " style="letter-spacing:-0.05px;left:63.3px;top:551px;line-height:19px">camera_link</div>
<div class="cb" style="left:173px;top:553px"></div>
<div class="ar" style="left:48px;top:576px;border:4px solid transparent;border-left:4px solid #555;border-right:0"></div>
<div class="t " style="letter-spacing:0.53px;left:63.3px;top:570px;line-height:19px">front_left_st…</div>
<div class="cb" style="left:173px;top:572px"></div>
<div class="abs" style="left:170px;top:0;width:1px;height:588px;background:#dedede"></div>
</div>
<div class="abs" style="left:73px;top:735px;width:341px;height:1px;background:#b8b8b8"></div>
<div class="abs" style="left:399px;top:148px;width:15px;height:587px;background:#e5e5e5;border-left:1px solid #c0c0c0;border-right:1px solid #c0c0c0"></div>
<div class="abs" style="left:400px;top:148px;width:13px;height:13px;background:#f8f8f8;border-bottom:1px solid #c4c4c4"></div>
<div class="abs" style="left:402px;top:152px;border:4px solid transparent;border-bottom:4px solid #444;border-top:0"></div>
<div class="abs" style="left:400px;top:162px;width:13px;height:391px;background:linear-gradient(90deg,#fdfdfd,#f3f3f3);border-bottom:1px solid #c4c4c4"></div>
<div class="abs" style="left:400px;top:722px;width:13px;height:13px;background:#f8f8f8;border-top:1px solid #c4c4c4"></div>
<div class="abs" style="left:402px;top:726px;border:4px solid transparent;border-top:4px solid #444;border-bottom:0"></div>
<div class="abs" style="left:236px;top:736.500px;width:18px;height:2px;background-image:radial-gradient(circle,#c6c6c6 0.600px,transparent 0.900px);background-size:3px 2px"></div>
<div class="abs" style="left:72px;top:740px;width:342px;height:77px;background:#fff;border:1px solid #bcbcbc"></div>
<div class="t b" style="letter-spacing:-0.62px;left:77.4px;top:744px;line-height:19px">TF</div>
<div class="t" style="left:77.4px;top:779px;line-height:17px"><span class="t" style="letter-spacing:0.09px;left:0;top:0;position:absolute">Displays the TF transform hierarchy.</span><span class="t lnk" style="letter-spacing:0.52px;left:246.500px;top:0">More</span></div>
<div class="t" style="left:77.4px;top:796px;line-height:17px"><span class="t lnk" style="letter-spacing:0.52px;left:0;top:0">Information</span><span class="t" style="left:81px;top:0">.</span></div>
<div class="abs" style="left:399px;top:741px;width:14px;height:75px;background:linear-gradient(90deg,#fdfdfd,#f3f3f3);border-left:1px solid #c0c0c0"></div>
<div class="abs" style="left:400px;top:754px;width:13px;height:1px;background:#c4c4c4"></div>
<div class="abs" style="left:402px;top:746px;border:4px solid transparent;border-bottom:4px solid #444;border-top:0"></div>
<div class="abs" style="left:400px;top:795px;width:13px;height:9px;background:#dcdcdc;border-top:1px solid #c4c4c4;border-bottom:1px solid #c4c4c4"></div>
<div class="abs" style="left:402px;top:808px;border:4px solid transparent;border-top:4px solid #444;border-bottom:0"></div>
<div class="btn" style="left:74px;top:824px;width:80px;height:25px"><span class="t" style="letter-spacing:0.12px;position:relative;line-height:23px">Add</span></div>
<div class="btn" style="left:160px;top:824px;width:80px;height:25px"><span class="t" style="letter-spacing:0.17px;position:relative;line-height:23px">Duplicate</span></div>
<div class="btn" style="left:246px;top:824px;width:80px;height:25px"><span class="t" style="letter-spacing:-0.25px;position:relative;line-height:23px">Remove</span></div>
<div class="btn" style="left:332px;top:824px;width:80px;height:25px"><span class="t" style="letter-spacing:-0.22px;position:relative;line-height:23px">Rename</span></div>
<div class="abs" style="left:426px;top:485px;border:4px solid transparent;border-right:4px solid #444;border-left:0"></div>
<div class="abs" style="left:416.500px;top:481px;width:2px;height:18px;background-image:radial-gradient(circle,#c0c0c0 0.600px,transparent 0.900px);background-size:2px 3px"></div>
<div class="abs" style="left:1645px;top:481px;width:2px;height:18px;background-image:radial-gradient(circle,#c0c0c0 0.600px,transparent 0.900px);background-size:2px 3px"></div>
<div class="abs" style="left:1633px;top:485px;border:4px solid transparent;border-left:4px solid #444;border-right:0"></div>
<div id="viewport">
<svg width="1191" height="728" viewBox="436 125 1191 728" style="position:absolute;left:0;top:0">
<g stroke="#747474" stroke-width="0.95" fill="none">
<path d="M436 161.200L1627 200.800"/>
<path d="M436 342.800L659.200 125"/>
<path d="M436 437.200L1627 498"/>
<path d="M1043.500 125L915 853"/>
<path d="M1428.800 125L1627 420.800"/>
</g>
<path fill="#ffffff" d="M830.400 371.200L871.400 371.200L901.700 373L928.200 376L943.400 380.500L997.700 383L1023 383.800L1039.400 381L1058.300 380L1093.700 381.500L1143.700 387.100L1159.900 404.500L1161.400 441.200L1158.100 468.500L1141.700 498.800L1119.500 513.200L1089.900 514.400L1049.500 511.900L1030.500 508.900L1015.400 503.600L1002.700 503.100L992.600 505.100L980 506.100L969.900 504.800L958.500 500.800L933.300 499.300L914.300 503.600L889.100 503.800L848.600 501.300L822.900 498.800L812 490.400L803.700 476.500L793.800 436.100L795.100 429L808.700 419.700L817.600 400.700L814.800 384.300L820.300 376.700Z"/>
</svg>
</div>
<div class="abs" style="left:987px;top:854.5px;width:18px;height:2px;background-image:radial-gradient(circle,#c6c6c6 0.600px,transparent 0.900px);background-size:3px 2px"></div>
<div class="phead" style="left:1649px;top:125px;width:271px;height:22px"></div>
<svg class="abs" style="left:1652.500px;top:131.500px" width="17" height="10.500" viewBox="0 0 18 12"><path d="M0.500 1.500L5.500 6 0.500 10.500z" fill="#3a3a3a"/><rect x="5" y="1.500" width="12.500" height="9" rx="3.500" fill="#3a3a3a"/></svg>
<div class="t" style="letter-spacing:0.06px;left:1675.400px;top:127px;line-height:19px">Views</div>
<div class="pclose" style="left:1900px;top:127px"><i></i></div>
<div class="t" style="letter-spacing:-0.15px;left:1651.200px;top:156px;line-height:19px">Type:</div>
<div class="combo" style="left:1694px;top:153px;width:138px;height:25px"><span class="t" style="letter-spacing:0.43px;position:relative;line-height:23px">Orbit (rviz)</span></div>
<div class="btn" style="left:1838px;top:153px;width:80px;height:25px"><span class="t" style="letter-spacing:0.33px;position:relative;line-height:23px">Zero</span></div>
<div class="tree" style="left:1649px;top:186px;width:271px;height:634px;border:1px solid #bdbdbd">
<div class="ar" style="left:6px;top:6px;border:4px solid transparent;border-top:4px solid #555;border-bottom:0"></div>
<div class="t b" style="letter-spacing:-0.25px;left:23.6px;top:0px;line-height:17px">Current V…</div>
<div class="t b" style="letter-spacing:0.19px;left:115.600px;top:0px;line-height:17px">Orbit (rviz)</div>
<div class="t " style="letter-spacing:-0.38px;left:43px;top:17px;line-height:17px">Near Cl…</div>
<div class="t " style="letter-spacing:-0.49px;left:115.600px;top:17px;line-height:17px">0.01</div>
<div class="t " style="letter-spacing:0.04px;left:43px;top:34px;line-height:17px">Invert …</div>
<div class="cb" style="left:115px;top:35px;width:14px;height:14px"></div>
<div class="t " style="letter-spacing:0.15px;left:43px;top:51px;line-height:17px">Target …</div>
<div class="t " style="letter-spacing:-0.22px;left:115.600px;top:51px;line-height:17px">&lt;Fixed Frame&gt;</div>
<div class="t " style="letter-spacing:0.02px;left:43px;top:68px;line-height:17px">Distance</div>
<div class="t " style="letter-spacing:-0.11px;left:115.600px;top:68px;line-height:17px">1.68434</div>
<div class="t " style="letter-spacing:-0.71px;left:43px;top:85px;line-height:17px">Focal S…</div>
<div class="t " style="letter-spacing:-0.49px;left:115.600px;top:85px;line-height:17px">0.05</div>
<div class="t " style="letter-spacing:-0.71px;left:43px;top:102px;line-height:17px">Focal S…</div>
<div class="cb" style="left:115px;top:103px;width:14px;height:14px"><svg width="12" height="12" viewBox="0 0 12 12"><path d="M2.300 5.800L5.100 10.200 9 2.600" fill="none" stroke="#111" stroke-width="2"/></svg></div>
<div class="t " style="letter-spacing:-0.23px;left:43px;top:119px;line-height:17px">Yaw</div>
<div class="t " style="letter-spacing:-0.11px;left:115.600px;top:119px;line-height:17px">4.78858</div>
<div class="t " style="letter-spacing:0.03px;left:43px;top:136px;line-height:17px">Pitch</div>
<div class="t " style="letter-spacing:-0.08px;left:115.600px;top:136px;line-height:17px">0.749796</div>
<div class="t " style="letter-spacing:-0.07px;left:43px;top:153px;line-height:17px">Field o…</div>
<div class="t " style="letter-spacing:-0.08px;left:115.600px;top:153px;line-height:17px">0.785398</div>
<div class="ar" style="left:28px;top:174px;border:4px solid transparent;border-left:4px solid #555;border-right:0"></div>
<div class="t " style="letter-spacing:-0.65px;left:43px;top:170px;line-height:17px">Focal P…</div>
<div class="t " style="letter-spacing:-0.17px;left:115.600px;top:170px;line-height:17px">0.053153; 0.25432; -…</div>
<div class="abs" style="left:112px;top:0;width:1px;height:634px;background:#dedede"></div>
</div>
<div class="btn" style="left:1651px;top:826px;width:85px;height:25px"><span class="t" style="letter-spacing:-0.92px;position:relative;line-height:23px">Save</span></div>
<div class="btn" style="left:1742px;top:826px;width:85px;height:25px"><span class="t" style="letter-spacing:-0.25px;position:relative;line-height:23px">Remove</span></div>
<div class="btn" style="left:1833px;top:826px;width:85px;height:25px"><span class="t" style="letter-spacing:-0.22px;position:relative;line-height:23px">Rename</span></div>
<div class="phead" style="left:72px;top:859px;width:1848px;height:22px"></div>
<svg class="abs" style="left:75.500px;top:862.500px" width="17" height="17" viewBox="0 0 17 17"><circle cx="8.500" cy="8.500" r="7" fill="#fff" stroke="#6c6c6c" stroke-width="2"/><path d="M8.500 4.500V9H12" fill="none" stroke="#222" stroke-width="1.400"/></svg>
<div class="t" style="letter-spacing:-0.08px;left:98px;top:861px;line-height:19px">Time</div>
<div class="pclose" style="left:1900px;top:861px"><i></i></div>
<div class="btn" style="left:83px;top:888px;width:80px;height:25px;text-align:left"><span class="abs" style="left:11px;top:4px;width:6px;height:14px;background:linear-gradient(90deg,#a8a8a0,#d8d8d0);border:1px solid #8c8c86"></span><span class="abs" style="left:19px;top:4px;width:6px;height:14px;background:linear-gradient(90deg,#a8a8a0,#d8d8d0);border:1px solid #8c8c86"></span><span class="t" style="letter-spacing:-0.57px;left:27.500px;top:0;line-height:23px">Pause</span></div>
<div class="t" style="letter-spacing:0.1px;left:179.300px;top:892px;line-height:19px">Synchronization:</div>
<div class="combo" style="left:298px;top:888px;width:120px;height:25px"><span class="t" style="letter-spacing:1.31px;position:relative;line-height:23px">Off</span></div>
<div class="t" style="letter-spacing:-0.51px;left:434.200px;top:892px;line-height:19px">ROS Time:</div>
<div class="field" style="left:510px;top:888px;width:278px"><span class="t" style="letter-spacing:0.11px;position:relative;line-height:23px">227.44</span></div>
<div class="t" style="letter-spacing:-0.57px;left:794.500px;top:892px;line-height:19px">ROS Elapsed:</div>
<div class="field" style="left:890px;top:888px;width:278px"><span class="t" style="position:relative;line-height:23px">35.00</span></div>
<div class="t" style="letter-spacing:0.06px;left:1174px;top:892px;line-height:19px">Wall Time:</div>
<div class="field" style="left:1251px;top:888px;width:278px"><span class="t" style="letter-spacing:0.02px;position:relative;line-height:23px">1677774461.02</span></div>
<div class="t" style="letter-spacing:-0.09px;left:1535px;top:892px;line-height:19px">Wall Elapsed:</div>
<div class="field" style="left:1631px;top:888px;width:278px"><span class="t" style="letter-spacing:0.02px;position:relative;line-height:23px">198.20</span></div>
<div class="btn" style="left:74px;top:924px;width:53px;height:26px;border-radius:3px"><span class="t" style="letter-spacing:-0.04px;position:relative;line-height:24px">Reset</span></div>
<div class="abs" style="left:0;top:926px;height:19px;line-height:19px;font-size:15px" id="status"><span class="t b" style="letter-spacing:0.04px;left:133.3px;top:0">Left-Click:</span><span class="t" style="letter-spacing:0.02px;left:211.1px;top:0">Rotate.</span><span class="t b" style="left:264.2px;top:0">Middle-Click:</span><span class="t" style="left:361.3px;top:0">Move X/Y.</span><span class="t b" style="letter-spacing:0.04px;left:433.2px;top:0">Right-Click/Mouse Wheel:</span><span class="t" style="letter-spacing:-0.33px;left:619.5px;top:0">: Zoom.</span><span class="t b" style="letter-spacing:0.17px;left:672.2px;top:0">Shift</span><span class="t" style="letter-spacing:0.09px;left:707.5px;top:0">: More options.</span></div>
<div class="t" style="letter-spacing:-0.12px;left:1886px;top:923px;line-height:19px">7 fps</div>
</body>
</html>
